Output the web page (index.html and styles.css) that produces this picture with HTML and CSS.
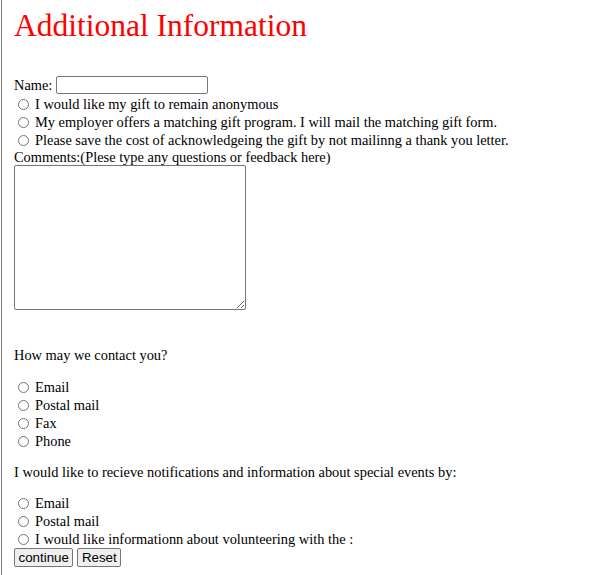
FILE: index.html
```html
<!DOCTYPE html>
<html>
<head>
<meta charset="utf-8">
<link rel="stylesheet" href="styles.css">
</head>
<body>
<div class="page">
  <h1 class="title">Additional Information</h1>
  <form class="form">
    <div class="row name-row">Name: <input class="text-input" type="text"></div>
    <label class="opt"><input class="radio" type="radio" name="a">I would like my gift to remain anonymous</label>
    <label class="opt"><input class="radio" type="radio" name="b">My employer offers a matching gift program. I will mail the matching gift form.</label>
    <label class="opt"><input class="radio" type="radio" name="c">Please save the cost of acknowledgeing the gift by not mailinng a thank you letter.</label>
    <div class="row comments-label">Comments:(Plese type any questions or feedback here)</div>
    <textarea class="comments"></textarea>
    <p class="question q1">How may we contact you?</p>
    <label class="opt"><input class="radio" type="radio" name="d">Email</label>
    <label class="opt"><input class="radio" type="radio" name="e">Postal mail</label>
    <label class="opt"><input class="radio" type="radio" name="f">Fax</label>
    <label class="opt"><input class="radio" type="radio" name="g">Phone</label>
    <p class="question q2">I would like to recieve notifications and information about special events by:</p>
    <label class="opt"><input class="radio" type="radio" name="h">Email</label>
    <label class="opt"><input class="radio" type="radio" name="i">Postal mail</label>
    <label class="opt"><input class="radio" type="radio" name="j">I would like informationn about volunteering with the :</label>
    <div class="buttons"><button class="btn" type="button">continue</button><button class="btn" type="reset">Reset</button></div>
  </form>
</div>
</body>
</html>
```

FILE: styles.css
```css
html, body {
  margin: 0;
  padding: 0;
  background: #fff;
}
body {
  font-family: "Liberation Serif", "Times New Roman", serif;
  font-size: 14.4px;
  color: #000;
}
.page {
  border-left: 1px solid #808080;
  margin-left: 1px;
  padding-left: 12px;
  min-height: 575px;
  box-sizing: border-box;
}
.title {
  margin: 0;
  padding-top: 7px;
  font-size: 31.5px;
  font-weight: normal;
  color: #ff0000;
  line-height: 37px;
  height: 37px;
}
.form {
  display: flex;
  flex-direction: column;
  align-items: flex-start;
  padding-top: 31px;
}
.row {
  line-height: 18px;
  display: flex;
  align-items: center;
}
.name-row {
  height: 20px;
  gap: 4px;
}
.comments-label {
  height: 16px;
  line-height: 16px;
}
.text-input {
  width: 152px;
  height: 18px;
  box-sizing: border-box;
  border: 1px solid #767676;
  border-radius: 2px;
  margin: 0;
  padding: 1px 2px;
}
.opt {
  display: flex;
  align-items: center;
  height: 18px;
  line-height: 18px;
}
.radio {
  width: 11px;
  height: 11px;
  margin: 0 6px 0 4px;
}
.comments {
  width: 232px;
  height: 145px;
  box-sizing: border-box;
  margin: 0;
  border: 1px solid #767676;
  border-radius: 2px;
}
.question {
  margin: 0;
  line-height: 18px;
}
.q1 {
  margin-top: 36px;
  margin-bottom: 14px;
}
.q2 {
  margin-top: 13px;
  margin-bottom: 13px;
}
.buttons {
  display: flex;
  gap: 4px;
}
.btn {
  font-family: "Liberation Sans", Arial, sans-serif;
  font-size: 13.33px;
  height: 19px;
  padding: 0 3.5px;
  margin: 0;
  border: 1px solid #767676;
  border-radius: 2px;
  background: #efefef;
  color: #000;
  line-height: 15px;
}
```
